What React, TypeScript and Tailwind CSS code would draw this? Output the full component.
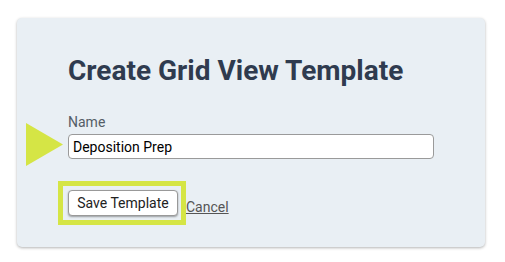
export default function App() {
  return (
    <div className="min-h-screen bg-white pt-[18px] pl-[17px] font-['Roboto',sans-serif]">
      <div className="w-[468px] h-[229px] rounded-[5px] bg-[#e9eff4] shadow-[0_1px_3px_rgba(0,0,0,0.3)] pl-[51px] pt-[37px]">
        <h1 className="text-[28px] leading-[32px] font-bold text-[#2f3b4f]">
          Create Grid View Template
        </h1>

        <label className="block mt-[27px] text-[14px] leading-[16px] text-[#555d66]">Name</label>

        {/* Input with annotation arrow */}
        <div className="relative mt-[4px] w-[366px]">
          <svg
            className="absolute left-[-42px] top-[-11px]"
            width="37"
            height="43"
            viewBox="0 0 37 43"
          >
            <polygon points="0,0 37,21.5 0,43" fill="#d5e545" />
          </svg>
          <input
            type="text"
            defaultValue="Deposition Prep"
            className="block w-full h-[25px] rounded-[4px] border border-[#9a9a9a] bg-white px-[4px] text-[14px] text-black outline-none"
          />
        </div>

        {/* Actions */}
        <div className="mt-[22px] flex items-end">
          <div className="-ml-[10px] border-[5px] border-[#d5e545] pt-[4px] pb-[4px] pl-[5px] pr-[3px]">
            <button className="h-[26px] w-[110px] rounded-[4px] border border-[#999] bg-white text-[14px] text-[#222] shadow-[0_1px_2px_rgba(0,0,0,0.35)]">
              Save Template
            </button>
          </div>
          <a href="#" className="mb-[10px] text-[14px] leading-[16px] text-[#555] underline">
            Cancel
          </a>
        </div>
      </div>
    </div>
  );
}
